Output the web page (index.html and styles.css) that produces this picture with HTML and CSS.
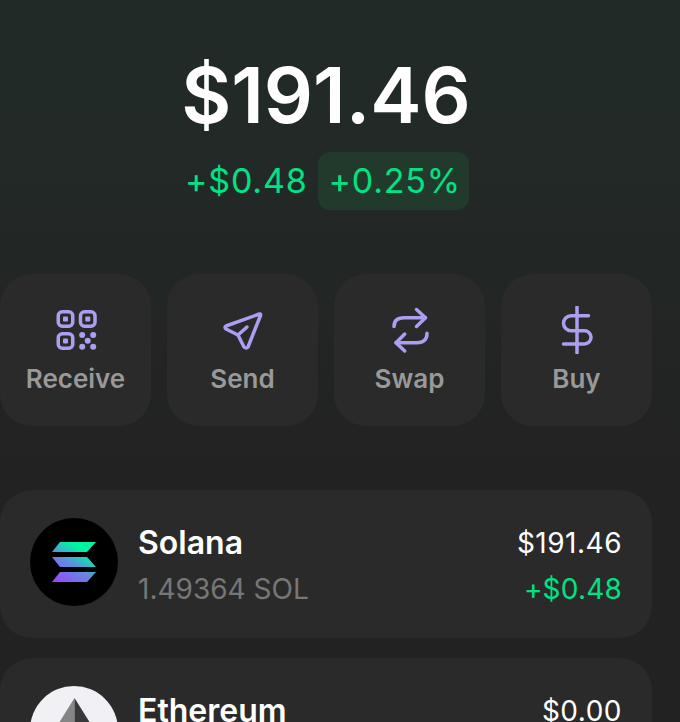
FILE: index.html
```html
<!DOCTYPE html>
<html lang="en">
<head>
    <meta charset="UTF-8">
    <title>Wallet</title>
    <link rel="stylesheet" href="styles.css">
</head>
<body>
<div class="wallet">
    <div class="balance">
        <div class="total">$191.46</div>
        <div class="change">
            <span class="change-value">+$0.48</span>
            <span class="change-pill">+0.25%</span>
        </div>
    </div>

    <div class="actions">
        <div class="action">
            <svg class="icon" viewBox="0 0 48 48" fill="none" stroke="#ab9ff2" stroke-width="3.5" stroke-linecap="round" stroke-linejoin="round">
                <rect x="6.250" y="5.750" width="14.500" height="14.500" rx="4"/>
                <rect x="28.500" y="5.750" width="14.500" height="14.500" rx="4"/>
                <rect x="6.250" y="27.750" width="14.500" height="14.500" rx="4"/>
                <g fill="#ab9ff2" stroke="none">
                    <rect x="11" y="10.500" width="5" height="5" rx="1"/>
                    <rect x="33.250" y="10.500" width="5" height="5" rx="1"/>
                    <rect x="11" y="32.500" width="5" height="5" rx="1"/>
                    <circle cx="30.200" cy="29" r="3"/>
                    <circle cx="41.200" cy="29" r="3"/>
                    <circle cx="35.700" cy="34.700" r="3"/>
                    <circle cx="30.200" cy="40.700" r="3"/>
                    <circle cx="41.200" cy="40.700" r="3"/>
                </g>
            </svg>
            <span class="action-label">Receive</span>
        </div>
        <div class="action">
            <svg class="icon" viewBox="0 0 48 48" fill="none" stroke="#ab9ff2" stroke-width="3.5" stroke-linecap="round" stroke-linejoin="round">
                <path d="M40.500 8 L7 20 Q5 21 7 23 L19 29 L25 41 Q27.500 43 29 41 L41.500 9.500 Q42 7.500 40.500 8 Z"/>
                <path d="M19 29 L28 21"/>
            </svg>
            <span class="action-label">Send</span>
        </div>
        <div class="action">
            <svg class="icon" viewBox="0 0 48 48" fill="none" stroke="#ab9ff2" stroke-width="3.5" stroke-linecap="round" stroke-linejoin="round">
                <path d="M8 20.500 Q8 11.700 18 11.700 H39.500"/>
                <path d="M30.500 3.500 L39.500 11.700 L30.500 20.500"/>
                <path d="M41 27.300 Q41 36.700 31 36.700 H10"/>
                <path d="M18.700 28 L10 36.700 L18.700 45"/>
            </svg>
            <span class="action-label">Swap</span>
        </div>
        <div class="action">
            <svg class="icon" viewBox="0 0 48 48" fill="none" stroke="#ab9ff2" stroke-width="3.5" stroke-linecap="round" stroke-linejoin="round">
                <path d="M24 1 V47"/>
                <path d="M35.500 9.700 H18 A7.500 7.500 0 0 0 18 24.700 H31.400 A6.650 6.650 0 0 1 31.400 38 H10.500"/>
            </svg>
            <span class="action-label">Buy</span>
        </div>
    </div>

    <div class="tokens">
        <div class="token">
            <div class="token-logo logo-sol">
                <svg viewBox="0 0 88 88">
                    <defs>
                        <linearGradient id="solGrad" x1="30" y1="68" x2="58" y2="24" gradientUnits="userSpaceOnUse">
                            <stop offset="0" stop-color="#9c45ff"/>
                            <stop offset="0.45" stop-color="#6488e0"/>
                            <stop offset="0.8" stop-color="#00f2a4"/>
                        </linearGradient>
                    </defs>
                    <path fill="url(#solGrad)" d="M30 24 H66 L57 34 H22 Z"/>
                    <path fill="url(#solGrad)" d="M22 39 H57 L66 49 H30 Z"/>
                    <path fill="url(#solGrad)" d="M30 54 H66 L57 64 H22 Z"/>
                </svg>
            </div>
            <div class="token-info">
                <div class="token-name">Solana</div>
                <div class="token-amount">1.49364 SOL</div>
            </div>
            <div class="token-values">
                <div class="token-price">$191.46</div>
                <div class="token-change">+$0.48</div>
            </div>
        </div>
        <div class="token">
            <div class="token-logo logo-eth">
                <svg viewBox="0 0 88 88">
                    <path fill="#858585" d="M44.500 12 V60 L19.500 52 Z"/>
                    <path fill="#38383a" d="M44.500 12 V60 L69.500 52 Z"/>
                </svg>
            </div>
            <div class="token-info">
                <div class="token-name">Ethereum</div>
            </div>
            <div class="token-values">
                <div class="token-price">$0.00</div>
            </div>
        </div>
    </div>
</div>
</body>
</html>
```

FILE: styles.css
```css
* {
    margin: 0;
    padding: 0;
    box-sizing: border-box;
}

html, body {
    height: 722px;
    overflow: hidden;
}

body {
    background: linear-gradient(180deg, #222a27 0, #222a27 120px, #222222 480px);
    font-family: Inter, "Liberation Sans", sans-serif;
}

.wallet {
    width: 652px;
    padding-top: 49px;
}

.balance {
    display: flex;
    flex-direction: column;
    align-items: center;
}

.total {
    font-size: 77px;
    line-height: 92px;
    font-weight: 600;
    color: #fff;
}

.change {
    display: flex;
    align-items: center;
    gap: 10px;
    margin-top: 11px;
    padding-left: 2px;
    font-size: 34px;
    line-height: 58px;
    letter-spacing: 0.8px;
    color: #00e283;
}

.change-pill {
    padding: 0 8px 0 11px;
    background: #213a2b;
    border-radius: 12px;
}

.actions {
    display: flex;
    gap: 16px;
    margin-top: 64px;
}

.action {
    flex: 1;
    height: 152px;
    padding-top: 32px;
    display: flex;
    flex-direction: column;
    align-items: center;
    background: #2a2a2a;
    border-radius: 32px;
}

.icon {
    width: 48px;
    height: 48px;
}

.action-label {
    margin-top: 8px;
    font-size: 26px;
    line-height: 34px;
    font-weight: 600;
    color: #999;
}

.tokens {
    display: flex;
    flex-direction: column;
    gap: 20px;
    margin-top: 64px;
}

.token {
    display: flex;
    align-items: flex-start;
    height: 148px;
    padding: 28px 30px 0;
    background: #2a2a2a;
    border-radius: 32px;
}

.token-logo {
    width: 88px;
    height: 88px;
    border-radius: 50%;
    overflow: hidden;
}

.token-logo svg {
    display: block;
    width: 88px;
    height: 88px;
}

.logo-sol {
    background: #000;
}

.logo-eth {
    background: #f0f0f5;
}

.token-info {
    flex: 1;
    margin-left: 20px;
    padding-top: 2px;
}

.token-name {
    font-size: 32px;
    line-height: 46px;
    font-weight: 600;
    color: #fff;
}

.token-amount {
    font-size: 28px;
    line-height: 46px;
    color: #777;
}

.token-values {
    padding-top: 2px;
    text-align: right;
}

.token-price {
    font-size: 28px;
    line-height: 46px;
    letter-spacing: 0.5px;
    color: #fff;
}

.token-change {
    font-size: 28px;
    line-height: 46px;
    letter-spacing: 0.2px;
    color: #00e283;
}
```
